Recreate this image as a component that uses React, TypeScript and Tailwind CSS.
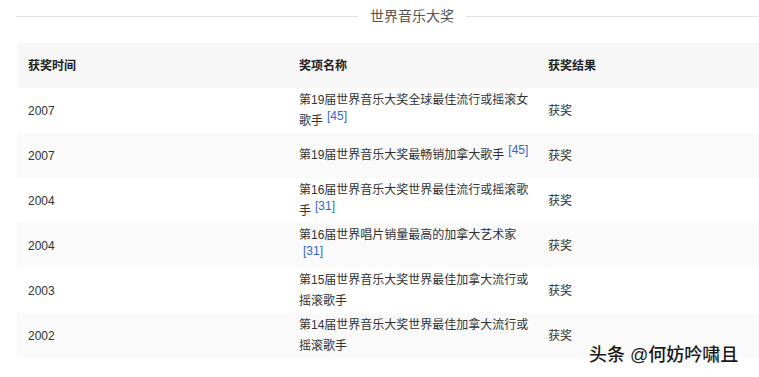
import React from 'react';

type Row = {
  year: string;
  award: string;
  cite?: string;
  result: string;
};

const ROWS: Row[] = [
  { year: '2007', award: '第19届世界音乐大奖全球最佳流行或摇滚女歌手', cite: '[45]', result: '获奖' },
  { year: '2007', award: '第19届世界音乐大奖最畅销加拿大歌手', cite: '[45]', result: '获奖' },
  { year: '2004', award: '第16届世界音乐大奖世界最佳流行或摇滚歌手', cite: '[31]', result: '获奖' },
  { year: '2004', award: '第16届世界唱片销量最高的加拿大艺术家', cite: '[31]', result: '获奖' },
  { year: '2003', award: '第15届世界音乐大奖世界最佳加拿大流行或摇滚歌手', result: '获奖' },
  { year: '2002', award: '第14届世界音乐大奖世界最佳加拿大流行或摇滚歌手', result: '获奖' }
];

const FONT = "font-['Liberation_Sans','Noto_Sans_CJK_SC',sans-serif]";

export default function App() {
  return (
    <div className={`w-[759px] h-[377px] bg-white overflow-hidden relative ${FONT}`}>
      {/* Section title */}
      <div className="flex items-center pl-[16px] pt-[7px] h-[19px] box-content">
        <div className="w-[342px] h-px bg-[#e4e4e4]" />
        <div className="px-[12px] text-[14px] leading-[19px] text-[#555]">世界音乐大奖</div>
        <div className="flex-1 h-px bg-[#e4e4e4]" />
      </div>

      {/* Table */}
      <div className="ml-[17px] mt-[17px] text-[12px] text-[#333]">
        <div className="grid grid-cols-[272px_250px_1fr] h-[45px] items-center bg-[#f7f7f7] font-bold text-[#222]">
          <div className="pl-[11px]">获奖时间</div>
          <div className="pl-[10px]">奖项名称</div>
          <div className="pl-[9px]">获奖结果</div>
        </div>
        {ROWS.map((row, i) => (
          <div
            key={i}
            className={`grid grid-cols-[272px_250px_1fr] h-[45px] items-center ${i % 2 === 1 ? 'bg-[#fafafa]' : 'bg-white'}`}
          >
            <div className="pl-[11px]">{row.year}</div>
            <div className="pl-[10px] pr-[5px] leading-[21px]">
              {row.award}
              {row.cite && (
                <span className="ml-[4px] text-[#3366cc] relative -top-[5px] leading-none">{row.cite}</span>
              )}
            </div>
            <div className="pl-[9px]">{row.result}</div>
          </div>
        ))}
      </div>

      {/* Watermark */}
      <div className="absolute left-[589px] top-[344px] text-[18px] leading-[22px] font-medium text-[#1a1a1a] [text-shadow:0_0_2px_#fff,0_0_2px_#fff]">
        头条 @何妨吟啸且
      </div>
    </div>
  );
}
